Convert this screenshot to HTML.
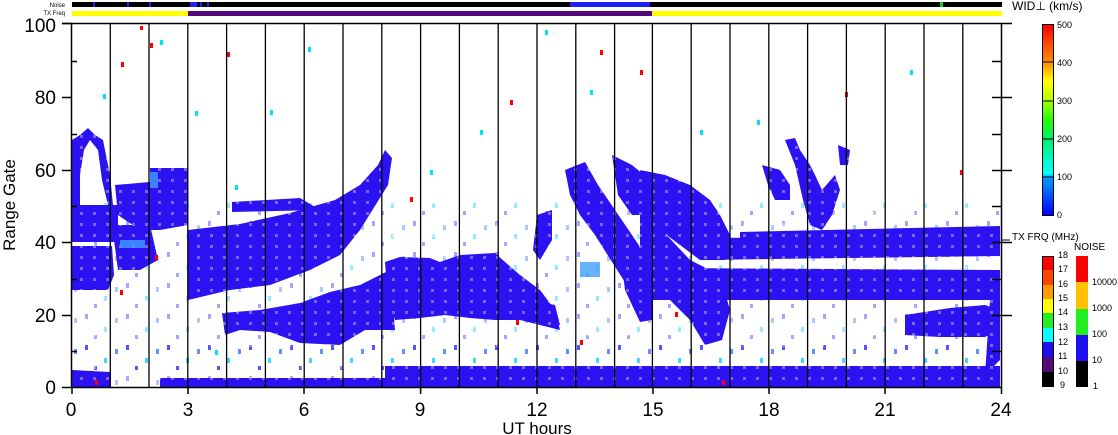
<!DOCTYPE html>
<html><head><meta charset="utf-8"><style>
html,body{margin:0;padding:0;background:#fff;}
body{width:1118px;height:435px;overflow:hidden;position:relative;font-family:"Liberation Sans",sans-serif;}
</style></head><body>
<svg width="1118" height="435" viewBox="0 0 1118 435" xmlns="http://www.w3.org/2000/svg" style="position:absolute;left:0;top:0">
<defs>
<linearGradient id="g1" x1="0" y1="1" x2="0" y2="0">
<stop offset="0" stop-color="#0000ff"/><stop offset="0.2" stop-color="#00a0ff"/><stop offset="0.22" stop-color="#00ffff"/>
<stop offset="0.4" stop-color="#00f070"/><stop offset="0.5" stop-color="#20ff00"/><stop offset="0.62" stop-color="#c0ff00"/>
<stop offset="0.7" stop-color="#ffff00"/><stop offset="0.8" stop-color="#ff9000"/><stop offset="1" stop-color="#ff0000"/>
</linearGradient>
<pattern id="spk" width="41" height="31" patternUnits="userSpaceOnUse">
<rect x="3" y="4" width="3" height="5" fill="#2020ff"/>
<rect x="22" y="17" width="3" height="5" fill="#00d0ff"/>
<rect x="33" y="8" width="3" height="5" fill="#3070ff"/>
<rect x="12" y="25" width="3" height="4" fill="#2020ff"/>
</pattern>
<pattern id="hole" width="13" height="11" patternUnits="userSpaceOnUse">
<rect x="2" y="3" width="3" height="3" fill="#fff"/>
</pattern>
</defs>
<text x="65" y="7" font-size="6" text-anchor="end" font-family="Liberation Sans,sans-serif">Noise</text>
<text x="65" y="15" font-size="6" text-anchor="end" font-family="Liberation Sans,sans-serif">TX Freq</text>
<rect x="72" y="2" width="930" height="5" fill="#000"/>
<rect x="93" y="2" width="2" height="5" fill="#2020ff"/>
<rect x="127" y="2" width="2" height="5" fill="#2020ff"/>
<rect x="149" y="2" width="2" height="5" fill="#2020ff"/>
<rect x="190" y="2" width="7" height="5" fill="#2020ff"/>
<rect x="200" y="2" width="2" height="5" fill="#2020ff"/>
<rect x="207" y="2" width="2" height="5" fill="#2020ff"/>
<rect x="570" y="2" width="80" height="5" fill="#2020ff"/>
<rect x="940" y="2" width="3" height="5" fill="#22cc22"/>
<rect x="72" y="11" width="116" height="5" fill="#ffff00"/>
<rect x="188" y="11" width="464" height="5" fill="#55087a"/>
<rect x="652" y="11" width="350" height="5" fill="#ffff00"/>
<text x="1012" y="10" font-size="12" font-family="Liberation Sans,sans-serif">WID⊥ (km/s)</text>

<rect x="72" y="200" width="930" height="187" fill="url(#spk)" opacity="0.4"/>
<rect x="72" y="340" width="930" height="30" fill="url(#spk)" opacity="0.6"/>

<g fill="#2c12f2">
<polygon points="72,140 80,135 88,128 95,135 103,140 110,175 113,205 108,205 102,180 98,150 90,140 84,150 80,175 80,210 72,210"/>
<polygon points="72,205 118,205 118,242 72,242"/>
<polygon points="72,246 112,246 114,275 108,290 72,290"/>
<polygon points="115,185 150,182 150,168 188,168 188,225 160,230 140,230 118,215"/>
<polygon points="112,225 150,225 158,260 140,270 118,270"/>
<polygon points="188,230 240,224 290,213 335,200 360,185 378,165 385,150 392,158 388,185 360,230 340,255 310,270 270,285 230,290 188,300"/>
<polygon points="232,202 300,198 320,210 232,212"/>
<polygon points="222,313 260,310 300,303 330,292 360,285 390,270 395,330 365,330 340,345 300,343 270,332 240,330 225,335"/>
<polygon points="385,262 400,257 430,258 440,262 460,255 495,253 505,262 520,275 540,290 555,310 560,330 540,325 520,320 495,320 470,318 445,315 420,318 395,320 388,300"/>
<polygon points="565,170 585,162 598,185 615,210 632,235 650,262 650,290 630,290 612,262 595,235 580,215 570,195"/>
<polygon points="612,155 632,165 650,180 652,215 632,215 618,195"/>
<polygon points="620,250 640,258 652,290 652,320 640,322 625,290"/>
<polygon points="530,300 555,305 560,325 545,325 530,320"/>
<polygon points="537,215 552,210 552,240 540,260 533,250"/>
<polygon points="640,170 665,175 690,185 710,200 720,215 730,235 725,260 700,260 680,245 660,230 640,225"/>
<polygon points="640,225 660,228 690,260 720,275 730,310 722,340 705,345 690,320 670,300 645,300 640,280"/>
<polygon points="700,238 1000,236 1000,256 700,260"/>
<polygon points="740,232 1000,226 1000,240 740,240"/>
<polygon points="670,268 1000,270 1000,300 670,300"/>
<polygon points="905,315 950,308 985,305 1000,310 1000,330 985,337 940,337 905,335"/>
<polygon points="990,300 1000,300 1000,360 985,375"/>
<polygon points="762,165 780,170 790,185 790,200 775,200 768,185"/>
<polygon points="785,140 795,138 800,150 810,165 815,175 822,190 835,175 840,190 832,215 822,230 810,225 803,200 795,165"/>
<polygon points="838,145 850,150 848,165 840,165"/>
<polygon points="385,366 1000,366 1000,387 385,387"/>
<polygon points="160,378 385,378 385,387 160,387"/>
<polygon points="72,370 110,372 110,387 72,387"/>
</g>
<rect x="72" y="130" width="930" height="257" fill="url(#hole)" opacity="0.35"/>
<g fill="#3fa0ff" opacity="0.8">
<rect x="580" y="262" width="20" height="15"/>
<rect x="150" y="172" width="8" height="16"/>
<rect x="120" y="240" width="25" height="8"/>
</g>
<g fill="#ff0000">
<rect x="140" y="26" width="3" height="4"/><rect x="150" y="43" width="3" height="5"/><rect x="227" y="52" width="3" height="5"/>
<rect x="121" y="62" width="3" height="5"/><rect x="155" y="255" width="3" height="5"/><rect x="640" y="70" width="3" height="5"/>
<rect x="600" y="50" width="3" height="5"/><rect x="516" y="320" width="3" height="5"/>
<rect x="510" y="100" width="3" height="5"/><rect x="95" y="380" width="3" height="5"/><rect x="960" y="170" width="3" height="5"/>
<rect x="675" y="312" width="3" height="5"/><rect x="120" y="290" width="3" height="5"/><rect x="580" y="340" width="3" height="5"/>
<rect x="845" y="92" width="3" height="5"/><rect x="410" y="197" width="3" height="5"/><rect x="722" y="380" width="3" height="5"/>
</g>
<g fill="#00e0ff">
<rect x="103" y="94" width="3" height="5"/><rect x="160" y="40" width="3" height="5"/><rect x="195" y="111" width="3" height="5"/>
<rect x="430" y="170" width="3" height="5"/><rect x="545" y="30" width="3" height="5"/><rect x="757" y="120" width="3" height="5"/>
<rect x="308" y="47" width="3" height="5"/><rect x="215" y="350" width="3" height="5"/>
<rect x="235" y="185" width="3" height="5"/><rect x="270" y="110" width="3" height="5"/><rect x="700" y="130" width="3" height="5"/>
<rect x="910" y="70" width="3" height="5"/><rect x="480" y="130" width="3" height="5"/><rect x="590" y="90" width="3" height="5"/>
</g>

<g stroke="#000" stroke-width="1.3">
<line x1="110.3" y1="23" x2="110.3" y2="387"/><line x1="149" y1="23" x2="149" y2="387"/><line x1="187.8" y1="23" x2="187.8" y2="387"/>
<line x1="226.6" y1="23" x2="226.6" y2="387"/><line x1="265.4" y1="23" x2="265.4" y2="387"/><line x1="304.2" y1="23" x2="304.2" y2="387"/>
<line x1="343" y1="23" x2="343" y2="387"/><line x1="381.8" y1="23" x2="381.8" y2="387"/><line x1="420.6" y1="23" x2="420.6" y2="387"/>
<line x1="459.4" y1="23" x2="459.4" y2="387"/><line x1="498.2" y1="23" x2="498.2" y2="387"/><line x1="537" y1="23" x2="537" y2="387"/>
<line x1="575.8" y1="23" x2="575.8" y2="387"/><line x1="614.6" y1="23" x2="614.6" y2="387"/><line x1="652.4" y1="23" x2="652.4" y2="387"/>
<line x1="691.2" y1="23" x2="691.2" y2="387"/><line x1="730" y1="23" x2="730" y2="387"/><line x1="768.8" y1="23" x2="768.8" y2="387"/>
<line x1="807.6" y1="23" x2="807.6" y2="387"/><line x1="846.4" y1="23" x2="846.4" y2="387"/><line x1="885.2" y1="23" x2="885.2" y2="387"/>
<line x1="924" y1="23" x2="924" y2="387"/><line x1="962.8" y1="23" x2="962.8" y2="387"/>
</g>
<g stroke="#000" stroke-width="1.5" fill="none">
<line x1="71.5" y1="23" x2="71.5" y2="388"/>
<line x1="1001.5" y1="23" x2="1001.5" y2="388"/>
<line x1="62" y1="387.5" x2="1002" y2="387.5"/>
<line x1="62" y1="23.5" x2="1012" y2="23.5"/>
<path d="M62 315.5H72M62 242.5H72M62 170.5H72M62 97.5H72M62 23.5H72"/>
<path d="M72 351.5H77M72 279.5H77M72 206.5H77M72 134.5H77M72 61.5H77"/>
<path d="M992 351.5H1002M992 315.5H1012M992 279.5H1002M992 242.5H1012M992 206.5H1002M992 170.5H1012M992 134.5H1002M992 97.5H1012M992 61.5H1002"/>
<path d="M72 387V394M188 387V394M304 387V394M420.6 387V394M537 387V394M653 387V394M769 387V394M885 387V394M1001.5 387V394"/>
</g>
<g font-size="19" font-family="Liberation Sans,sans-serif" fill="#000" text-anchor="end">
<text x="56" y="394">0</text><text x="56" y="322">20</text><text x="56" y="249">40</text>
<text x="56" y="177">60</text><text x="56" y="104">80</text><text x="56" y="32">100</text>
</g>
<g font-size="19" font-family="Liberation Sans,sans-serif" fill="#000" text-anchor="middle">
<text x="71" y="416">0</text><text x="188" y="416">3</text><text x="304" y="416">6</text><text x="420" y="416">9</text>
<text x="537" y="416">12</text><text x="653" y="416">15</text><text x="769" y="416">18</text><text x="885" y="416">21</text><text x="1001" y="416">24</text>
<text x="537" y="434" font-size="17">UT hours</text>
</g>
<text transform="translate(15,205) rotate(-90)" font-size="17" text-anchor="middle" font-family="Liberation Sans,sans-serif">Range Gate</text>

<rect x="1042.5" y="24.5" width="11" height="191" fill="url(#g1)" stroke="#000"/>
<g stroke="#000"><line x1="1042" y1="62" x2="1054" y2="62"/><line x1="1042" y1="101" x2="1054" y2="101"/><line x1="1042" y1="139" x2="1054" y2="139"/><line x1="1042" y1="177" x2="1054" y2="177"/></g>
<g font-size="9" font-family="Liberation Sans,sans-serif">
<text x="1057" y="28">500</text><text x="1057" y="66">400</text><text x="1057" y="104">300</text><text x="1057" y="142">200</text><text x="1057" y="180">100</text><text x="1057" y="218">0</text>
<text x="1012" y="240" font-size="10">TX FRQ (MHz)</text><text x="1074" y="250" font-size="10">NOISE</text>
</g>
<line x1="1002" y1="240" x2="1010" y2="240" stroke="#000"/>
<rect x="1042" y="256" width="12" height="14" fill="#ff0000"/>
<rect x="1042" y="270" width="12" height="15" fill="#ff4400"/>
<rect x="1042" y="285" width="12" height="14" fill="#ff9900"/>
<rect x="1042" y="299" width="12" height="14" fill="#ffff00"/>
<rect x="1042" y="313" width="12" height="15" fill="#22ee22"/>
<rect x="1042" y="328" width="12" height="14" fill="#00ffff"/>
<rect x="1042" y="342" width="12" height="15" fill="#2010f0"/>
<rect x="1042" y="357" width="12" height="15" fill="#55087a"/>
<rect x="1042" y="372" width="12" height="15" fill="#000"/>
<rect x="1042.5" y="256.5" width="11" height="130" fill="none" stroke="#000"/>
<g font-size="9" font-family="Liberation Sans,sans-serif">
<text x="1058" y="258">18</text><text x="1058" y="272">17</text><text x="1058" y="287">16</text><text x="1058" y="301">15</text>
<text x="1058" y="315">14</text><text x="1058" y="330">13</text><text x="1058" y="345">12</text><text x="1058" y="359">11</text>
<text x="1058" y="374">10</text><text x="1060" y="388">9</text>
</g>
<rect x="1076" y="256" width="12" height="26" fill="#ff0000"/>
<rect x="1076" y="282" width="12" height="27" fill="#ffc000"/>
<rect x="1076" y="309" width="12" height="26" fill="#22ee22"/>
<rect x="1076" y="335" width="12" height="26" fill="#2010f0"/>
<rect x="1076" y="361" width="12" height="26" fill="#000"/>
<g font-size="9" font-family="Liberation Sans,sans-serif">
<text x="1092" y="285">10000</text><text x="1092" y="311">1000</text><text x="1092" y="337">100</text><text x="1092" y="363">10</text><text x="1093" y="389">1</text>
</g>
</svg>
</body></html>
